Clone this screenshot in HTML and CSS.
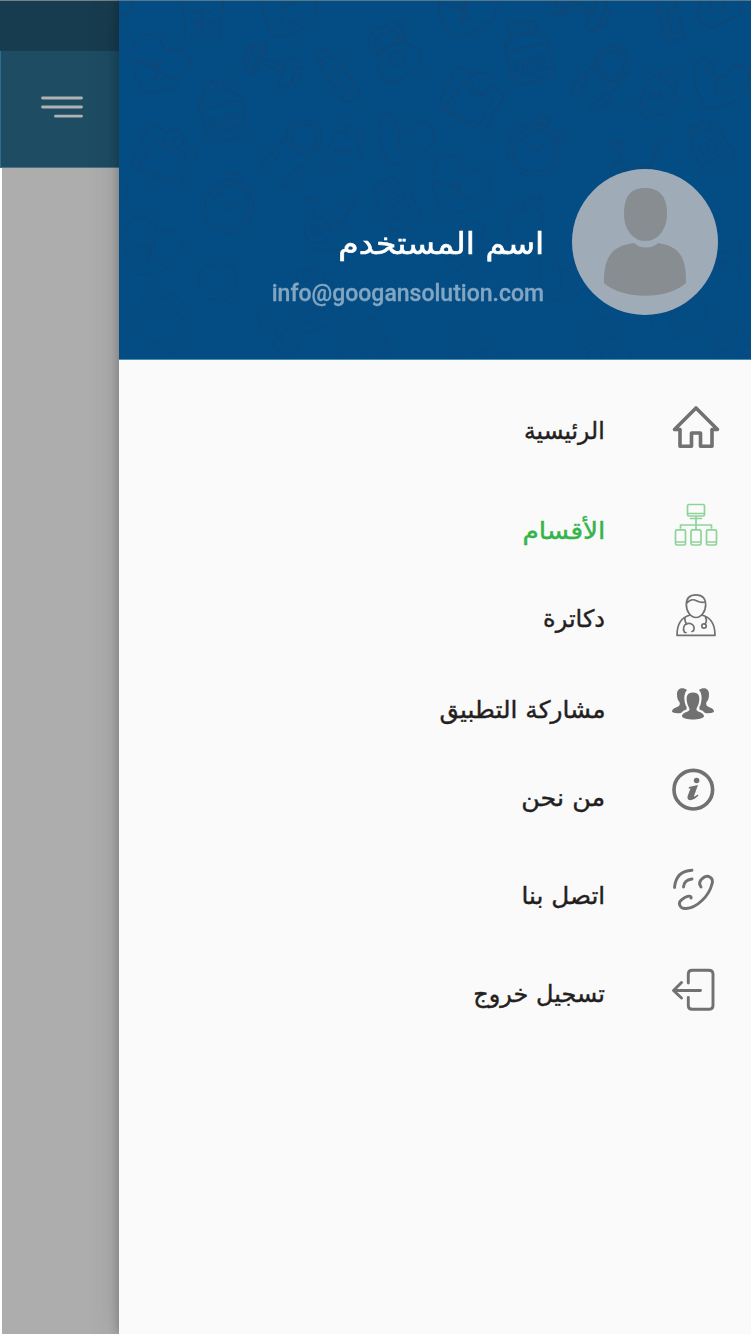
FILE: index.html
```html
<!DOCTYPE html>
<html lang="ar" dir="rtl">
<head>
<meta charset="utf-8">
<title>القائمة</title>
<link rel="stylesheet" href="styles.css">
</head>
<body>
<div class="screen">
  <aside class="drawer">
    <header class="profile">
      <svg class="pattern" viewBox="119 1 632 358" aria-hidden="true">
        <defs>
          <linearGradient id="fade" x1="0" y1="0" x2="0" y2="1">
            <stop offset="0" stop-color="#fff"/>
            <stop offset="1" stop-color="#fff" stop-opacity=".25"/>
          </linearGradient>
          <mask id="fadeMask" maskUnits="userSpaceOnUse" x="119" y="0" width="632" height="360"><rect x="119" width="632" height="360" fill="url(#fade)"/></mask>
          <g id="heart">
            <path d="M-29-12C-27-37 0-36 3-13C18-24 34-8 27 5C25 17 13 17 2 10L-9-2M-29-4C-30 6-24 20-16 28Q3 27 16 20M-29-6L-12 1L-8-4L-8 4L0-6L-8 16L-2 7"/>
          </g>
          <g id="whey">
            <path d="M-22-28L5-32L7-22L-20-17ZM-15-26V-22M-8-27V-23M-1-28V-24M-19-17Q-27-11-24 0L-16 28Q-15 33-8 31L19 24Q25 22 24 16L18-9Q14-19 5-20M-25-1L18-11M-18 24L24 14M-23-6Q-22-11-19-12"/>
            <text transform="rotate(-12)" x="-19" y="16" class="pattern-word" textLength="34" lengthAdjust="spacingAndGlyphs">WHEY</text>
          </g>
          <g id="scale">
            <path d="M-9-31Q-13-34-17-28L-31 1Q-34 7-28 10L8 30Q13 33 16 27L31 0Q34-7 28-10L19-15M-9-31L1-26M-8-18L-24 5Q-26 9-22 11L8 25L21 0Q24-6 15-6Q2-1-2-11Q-4-19-8-18"/>
            <circle cx="10" cy="-18" r="10"/><path d="M8-16L13-21"/>
          </g>
          <g id="timer">
            <circle r="26"/><circle r="22"/><circle r="3"/><path d="M2-1L13-7M-14-8Q-9-15-3-16M3-34L15-31L13-24L1-27ZM8-32V-27M22-17L26-20L29-17L25-13"/>
          </g>
          <g id="rope">
            <circle cx="14" cy="-12" r="17"/><circle cx="14" cy="-12" r="13"/>
            <path d="M-2-14L-15 0M29-3L12 18M-15 0L-10 5L-22 19Q-26 22-28 16Q-27 12-15 0ZM9 18L14 22L0 34Q-7 40-8 34Q-9 31 3 21Z"/>
          </g>
          <g id="watch">
            <path d="M-3-20L14-9Q19-6 16-1L6 17Q3 21-2 18L-16 9Q-20 6-17 1L-7-18Q-6-21-3-20M0-19L6-26L20-18L16-9M-16 10L-20 16L-7 25L-1 19M-9 1L-5-4L-2 3L2-5L4 3L8-2M18 0L21 2L18 8"/>
          </g>
          <g id="dumbbell">
            <g transform="rotate(24)"><rect x="-23" y="-16" width="11" height="32" rx="4"/><rect x="-29" y="-9" width="6" height="18" rx="3"/><rect x="13" y="-16" width="11" height="32" rx="4"/><rect x="24" y="-9" width="6" height="18" rx="3"/><path d="M-12-3H13M-12 3H13M-16-16V16"/></g>
          </g>
          <g id="bottle">
            <g transform="rotate(-35)"><path d="M-6-30H6V-22H-6ZM-5-22Q-10-16-9-9L-9 20Q-10 28-3 28H6Q11 28 10 20V-9Q11-16 5-22M-10-5H10M-10 20H10M2-1L-4 8H3L-2 16"/></g>
          </g>
          <g id="kettle">
            <g transform="rotate(-28)"><path d="M-14-5Q-25-28-10-30H10Q24-28 13-5M-8-8Q-17-22-8-23H8Q16-22 8-8"/><path d="M-14-6Q-30 9-16 24H16Q30 9 14-6Q0-13-14-6"/><circle cy="5" r="7"/></g>
          </g>
          <g id="arm">
            <path d="M-13 25Q-30-7-22-21C-16-32-3-24-7-14Q-15-7-13-17M-7-14Q-2-8-4 3M-13 25Q17 22 28 4Q33-9 28-14C20-24 7-16 9-8Q-7-10-3 11M5 10Q13 11 15 3"/>
          </g>
          <g id="jar">
            <g transform="rotate(-30)"><path d="M-12-25H12V-16H-12ZM-8-25V-18M-2-25V-18M4-25V-18M-12-16Q-18-10-17-4V20Q-17 26-10 26H10Q17 26 17 20V-4Q17-12 12-16M-10-5H10V13H-10Z"/><circle cy="4" r="5"/></g>
          </g>
          <g id="bike"><circle cx="-10" cy="11" r="13"/><circle cx="-10" cy="11" r="5"/><path d="M-24-20H-10L-14-16H-21ZM-17-16L-9 11L18 2L27-18M12-18H26L32-24M22-15L15 6Q27 7 26 17M-19 30H28"/></g>
          <g id="abs"><path d="M-22-18Q-15 5-18 20M22-18Q16 5 19 20M-13-9Q-6-4 0-7Q6-4 13-9M-12 3Q-6 8 0 4Q6 8 12 3M-11 14H-2M2 14H11M0-12V14"/></g>
          <g id="apple"><path d="M0-10C-20-22-26 10-8 22Q0 18 8 22C26 10 20-22 0-10ZM0-12Q-1-21 5-25M4-18Q12-26 17-22Q12-14 4-18"/></g>
        </defs>
        <g class="pattern-lines" mask="url(#fadeMask)">
          <path d="M119 17L127 13Q134 8 133 1M119 178Q131 182 127 196L119 205"/>
          <use href="#heart" x="162" y="65"/><use href="#heart" x="468" y="8"/>
          <use href="#abs" x="202" y="18"/><use href="#arm" x="286" y="12"/>
          <use href="#whey" x="224" y="111"/><use href="#whey" x="530" y="53"/>
          <use href="#dumbbell" x="272" y="65"/><use href="#dumbbell" x="580" y="8"/>
          <use href="#bottle" x="337" y="76"/><use href="#bottle" transform="translate(668 14) rotate(20)"/>
          <use href="#kettle" x="395" y="54"/><use href="#kettle" x="715" y="0"/>
          <use href="#arm" x="403" y="140"/><use href="#arm" x="719" y="84"/>
          <use href="#scale" x="164" y="157"/><use href="#scale" x="471" y="100"/>
          <use href="#rope" x="290" y="149"/><use href="#rope" x="598" y="76"/>
          <use href="#watch" x="343" y="151"/><use href="#watch" x="658" y="96"/>
          <use href="#timer" x="227" y="207"/><use href="#timer" x="534" y="150"/>
          <use href="#bike" x="327" y="219"/><use href="#bike" x="634" y="162"/>
          <use href="#jar" x="396" y="203"/><use href="#jar" x="710" y="146"/>
          <use href="#heart" x="154" y="247"/><use href="#heart" x="462" y="186"/>
          <use href="#apple" x="525" y="220"/><use href="#apple" x="218" y="278"/>
          <use href="#watch" x="465" y="246"/><use href="#arm" x="564" y="276"/>
          <use href="#whey" x="318" y="300"/><use href="#bottle" x="275" y="330"/><use href="#timer" x="362" y="350"/>
          <use href="#scale" x="162" y="323"/><use href="#dumbbell" x="475" y="350"/><use href="#kettle" x="605" y="350"/>
          <use href="#abs" x="720" y="258"/><use href="#heart" x="678" y="311"/><use href="#whey" x="738" y="354"/>
        </g>
      </svg>
      <svg class="avatar" viewBox="0 0 146 146" aria-hidden="true">
        <circle cx="73" cy="73" r="73" fill="#9facb8"/>
        <path fill="#888d91" d="M73 19C58 19 52 28 52 45C52 59 60 72 73 72C87 72 95 59 95 45C95 28 88 19 73 19Z"/>
        <path fill="#888d91" d="M62 74C68 80 80 80 86 74C106 77 115 87 114 114C96 131 50 131 32 114C32 87 40 77 62 74Z"/>
      </svg>
      <div class="identity">
        <div class="name">اسم المستخدم</div>
        <div class="email" dir="ltr">info@googansolution.com</div>
      </div>
    </header>
    <nav class="menu">
      <a class="item home"><svg class="icon" viewBox="0 0 48 48"><path class="thick" d="M24 5L2.500 26.500H8V43.300H19.500V30H28.500V43.300H40V26.500H45.500Z"/></svg><span class="label">الرئيسية</span></a>
      <a class="item sections active"><svg class="icon" viewBox="0 0 48 48"><path class="thin" d="M17 3.500H31Q32.500 3.500 32.500 5V13.500Q32.500 15 31 15H17Q15.500 15 15.500 13.500V5Q15.500 3.500 17 3.500ZM15.500 12.500H32.500M18.500 17.500H29.500M24 15V28M8.500 27V24H39.500V27M5 28.800H12Q13.500 28.800 13.500 30.300V42.500Q13.500 44 12 44H5Q3.500 44 3.500 42.500V30.300Q3.500 28.800 5 28.800ZM3.500 41H13.500M20.500 28.800H27.500Q29 28.800 29 30.300V42.500Q29 44 27.500 44H20.500Q19 44 19 42.500V30.300Q19 28.800 20.500 28.800ZM19 41H29M36 28.800H43Q44.500 28.800 44.500 30.300V42.500Q44.500 44 43 44H36Q34.500 44 34.500 42.500V30.300Q34.500 28.800 36 28.800ZM34.500 41H44.500"/></svg><span class="label">الأقسام</span></a>
      <a class="item doctors"><svg class="icon" viewBox="0 0 48 48"><path class="thin" d="M24 3.800C17 3.800 14.300 8 14.300 13.500C14.300 21 19 26.500 24 26.500C29 26.500 33.700 21 33.700 13.500C33.700 8 31 3.800 24 3.800ZM14.500 12.500C18 8 21 8 25 10C28 11.500 31 11.500 33.500 11M18.500 24Q5 27 5 44.300H43Q43 27 29.500 24M13 26.500Q12.500 31 15 33M14 41.500H12.500C8 32 20 29.500 22 36Q22.500 40 20 40.500M33.500 26.500Q35.500 30 33 33"/><circle class="thin" cx="32" cy="35" r="2.200"/></svg><span class="label">دكاترة</span></a>
      <a class="item share"><svg class="icon" viewBox="0 0 48 48"><path class="solid" d="M21 12.500C15 12.500 14 16.500 15 22C15.500 26 17.500 27 17.500 30C16 32.500 10 32 10 36.500C12 40.500 30 40.500 32 36.500C32 32 26 32.500 24.500 30C24.500 27 26.500 26 27 22C28 16.500 27 12.500 21 12.500Z"/><path class="solid" d="M15 10C11 6.500 5 8 5 14Q5 20 7.500 22Q9 26 4 27.500Q0 28.500 0 32Q4 34 9 33Q11 30 14.500 29.500Q15.500 27 13.500 25C12 20 11.500 14 15 10ZM27 10C31 6.500 37 8 37 14Q37 20 34.500 22Q33 26 38 27.500Q42 28.500 42 32Q38 34 33 33Q31 30 27.500 29.500Q26.500 27 28.500 25C30 20 30.500 14 27 10Z"/></svg><span class="label">مشاركة التطبيق</span></a>
      <a class="item about"><svg class="icon" viewBox="0 0 48 48"><circle class="thick" cx="21.300" cy="23.700" r="19.300"/><circle class="solid" cx="24.600" cy="14.500" r="2.800"/><path class="solid" d="M17 21L26 19L22 30Q22 31.500 25.500 28.500L26.500 29.500Q21 35 17 34Q14.500 33 16 29L18.500 22.500L16.500 22.500Z"/></svg><span class="label">من نحن</span></a>
      <a class="item contact"><svg class="icon" viewBox="0 0 48 48"><path class="mid" d="M2.500 21.500Q4 5 20 4.300M11.500 21Q12 14 20 13M29 21Q25.500 16 31 12C36 8 42 12 40 18C37 30 25 42 14 42.500C8 43 5 37 10 33.500C16 28.500 20 30 19 32"/></svg><span class="label">اتصل بنا</span></a>
      <a class="item logout"><svg class="icon" viewBox="0 0 48 48"><path class="mid" d="M16.300 17V8Q16.300 4.300 20.300 4.300H36.500Q41 4.300 41 8V39.500Q41 43.300 36.500 43.300H20.300Q16.300 43.300 16.300 39.500V31.500M28.500 24.500H2M9.500 16.500L1.500 24.500L9.500 32"/></svg><span class="label">تسجيل خروج</span></a>
    </nav>
  </aside>
  <main class="page">
    <div class="statusbar"></div>
    <div class="toolbar">
      <svg class="burger" viewBox="0 0 42 23"><path d="M1.500 2H40.500M1.500 11H40.500M14.500 20.200H40.500"/></svg>
    </div>
  </main>
</div>
</body>
</html>
```
FILE: styles.css
```css
body {
  margin: 0;
  background: #fff;
  font-family: "DejaVu Sans", sans-serif;
}
.screen {
  display: flex;
  width: 751px;
  height: 1334px;
  overflow: hidden;
}
.drawer {
  width: 632px;
  background: #fafafa;
  box-shadow: 0 0 10px rgba(0, 0, 0, .26), 0 0 32px rgba(0, 0, 0, .14);
  z-index: 1;
}
.profile {
  position: relative;
  box-sizing: border-box;
  display: flex;
  align-items: flex-start;
  gap: 28px;
  height: 360px;
  padding: 169px 33px 0 0;
  background: #044c84;
  border-top: 1px solid #55798b;
  border-bottom: 1px solid #4b8eaf;
}
.pattern {
  position: absolute;
  inset: 0;
  width: 632px;
  height: 358px;
  overflow: hidden;
}
.pattern-lines {
  fill: none;
  stroke: #17456f;
  stroke-width: 1.4;
  stroke-linejoin: round;
  stroke-linecap: round;
  opacity: .75;
}
.pattern-word {
  font: 17px "Open Sans", sans-serif;
  stroke-width: .6;
  direction: ltr;
}
.avatar {
  position: relative;
  width: 146px;
  height: 146px;
  margin-top: -1px;
}
.identity {
  position: relative;
  padding-top: 54px;
}
.name {
  font-size: 30px;
  line-height: 40px;
  color: #fff;
  white-space: nowrap;
  transform: scaleX(1.1);
  transform-origin: right;
  -webkit-text-stroke: .6px currentColor;
}
.email {
  margin-top: 15px;
  font: 500 23px/30px Roboto, sans-serif;
  color: #82a6c2;
  text-align: right;
  -webkit-text-stroke: .3px currentColor;
}
.menu {
  display: grid;
  grid-template-rows: 98px 98px 82px 96px 76px 124px 76px;
  padding: 18px 31px 0 0;
}
.item {
  display: flex;
  align-items: center;
  gap: 67px;
  color: #231f20;
}
.icon {
  width: 48px;
  height: 48px;
  overflow: visible;
  color: #717171;
}
.thick, .mid, .thin {
  fill: none;
  stroke: currentColor;
  stroke-width: 3.6;
  stroke-linejoin: round;
  stroke-linecap: round;
}
.mid { stroke-width: 2.9; }
.thin { stroke-width: 1.7; }
.solid { fill: currentColor; }
.label {
  font-size: 24px;
  line-height: 32px;
  padding-top: 7px;
  white-space: nowrap;
  transform-origin: right;
  -webkit-text-stroke: .4px currentColor;
}
.active { color: #35b44a; }
.active .icon { color: #8ed39a; }
.home .label { transform: scaleX(.975); }
.sections .label { transform: scaleX(1.1); }
.share .label { transform: scaleX(1.035); }
.about .label { transform: scaleX(1.06); }
.contact .label { transform: scaleX(1.03); }
.sections .label, .share .label, .contact .label { padding-top: 11px; }
.about .label { padding-top: 16px; }
.page {
  width: 119px;
  box-sizing: border-box;
  background: linear-gradient(to right, #fff 2px, #adadad 2px);
}
.statusbar {
  box-sizing: border-box;
  height: 51px;
  background: #183c4f;
  border-top: 1px solid #748188;
}
.toolbar {
  box-sizing: border-box;
  display: flex;
  direction: ltr;
  height: 117px;
  padding: 45px 0 0 40px;
  background: #1d4c63;
  border-left: 1px solid #2b7090;
  border-bottom: 1px solid #4c7280;
}
.burger {
  flex: none;
  width: 42px;
  height: 23px;
}
.burger path {
  fill: none;
  stroke: #b2b2b2;
  stroke-width: 2.8;
  stroke-linecap: round;
}
```
